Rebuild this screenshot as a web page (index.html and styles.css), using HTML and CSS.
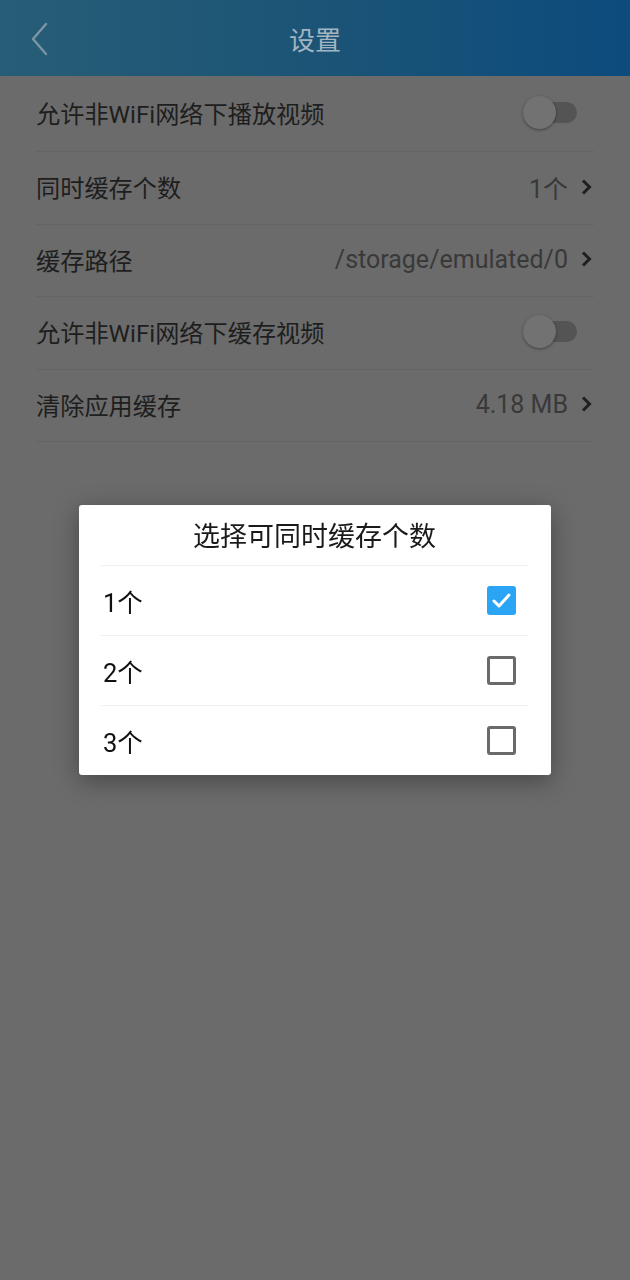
FILE: index.html
```html
<!DOCTYPE html>
<html lang="zh-CN">
<head>
<meta charset="utf-8">
<title>设置</title>
<link rel="stylesheet" href="styles.css">
</head>
<body>
<div class="page">
  <header class="topbar">
    <svg class="back" width="24" height="36" viewBox="0 0 24 36"><path d="M18 3 L5 18 L18 33" fill="none" stroke="#7c95a4" stroke-width="2.4" stroke-linecap="round" stroke-linejoin="round"/></svg>
    <div class="title">设置</div>
  </header>
  <ul class="list">
    <li class="row"><span class="label">允许非WiFi网络下播放视频</span><span class="switch"><span class="thumb"></span></span></li>
    <li class="row"><span class="label">同时缓存个数</span><span class="value">1个</span><svg class="chev" width="14" height="20" viewBox="0 0 14 20"><path d="M3 3.5 L9.5 10 L3 16.5" fill="none" stroke="#202020" stroke-width="3"/></svg></li>
    <li class="row"><span class="label">缓存路径</span><span class="value">/storage/emulated/0</span><svg class="chev" width="14" height="20" viewBox="0 0 14 20"><path d="M3 3.5 L9.5 10 L3 16.5" fill="none" stroke="#202020" stroke-width="3"/></svg></li>
    <li class="row"><span class="label">允许非WiFi网络下缓存视频</span><span class="switch"><span class="thumb"></span></span></li>
    <li class="row"><span class="label">清除应用缓存</span><span class="value">4.18 MB</span><svg class="chev" width="14" height="20" viewBox="0 0 14 20"><path d="M3 3.5 L9.5 10 L3 16.5" fill="none" stroke="#202020" stroke-width="3"/></svg></li>
  </ul>
</div>
<div class="overlay">
  <div class="dialog">
    <div class="dtitle">选择可同时缓存个数</div>
    <div class="opts">
      <div class="opt"><span>1个</span><span class="box checked"><svg width="29" height="29" viewBox="0 0 29 29"><path d="M7 15 L12 20 L22 9" fill="none" stroke="#fff" stroke-width="3" stroke-linecap="round" stroke-linejoin="round"/></svg></span></div>
      <div class="opt"><span>2个</span><span class="box"></span></div>
      <div class="opt"><span>3个</span><span class="box"></span></div>
    </div>
  </div>
</div>
</body>
</html>
```
FILE: styles.css
```css
html, body { margin: 0; padding: 0; }
body {
  background: #6b6b6b;
  font-family: Roboto, "Noto Sans CJK SC", sans-serif;
  width: 630px;
  height: 1280px;
  overflow: hidden;
}
.topbar {
  height: 76px;
  background: linear-gradient(90deg, #275d76 0%, #1b5476 50%, #0d4b7d 100%);
  display: flex;
  align-items: center;
  justify-content: center;
  position: relative;
}
.back { position: absolute; left: 28px; top: 21px; }
.title {
  color: #a3b5c1;
  font-size: 26px;
  font-family: "Noto Sans CJK SC", sans-serif;
}
.list { list-style: none; margin: 0; padding: 0 36px; }
.row {
  height: 69.5px;
  display: flex;
  align-items: center;
  border-bottom: 1px solid #646464;
  color: #1e1e1e;
  font-size: 24.2px;
  padding-bottom: 2px;
  box-sizing: content-box;
}
.row:first-child { height: 73px; }
.label { flex: 1; font-family: Roboto, "Noto Sans CJK SC", sans-serif; }
.value { color: #393939; font-size: 25px; margin-right: 12px; }
.chev { margin-right: 0; }
.switch {
  position: relative;
  width: 35px;
  height: 21px;
  margin-right: 17px;
  border-radius: 11px;
  background: #545454;
}
.thumb {
  position: absolute;
  left: -19px;
  top: -6px;
  width: 33px;
  height: 33px;
  border-radius: 50%;
  background: #727272;
  box-shadow: 0 1px 3px rgba(0,0,0,0.4);
}
.overlay {
  position: fixed;
  inset: 0;
  display: flex;
  align-items: center;
  justify-content: center;
}
.dialog {
  width: 472px;
  height: 270px;
  background: #fff;
  border-radius: 3px;
  box-shadow: 0 6px 24px rgba(0,0,0,0.35);
  padding: 0 23px 0 22px;
  box-sizing: border-box;
  display: flex;
  flex-direction: column;
}
.dtitle {
  height: 61px;
  border-bottom: 1.5px solid #f0f0f0;
  display: flex;
  align-items: center;
  justify-content: center;
  font-size: 27px;
  color: #1a1a1a;
  font-family: "Noto Sans CJK SC", sans-serif;
  box-sizing: border-box;
  padding-bottom: 2px;
}
.opts { flex: 1; display: flex; flex-direction: column; }
.opt {
  flex: 1;
  display: flex;
  align-items: center;
  justify-content: space-between;
  padding-left: 2px;
  padding-right: 12px;
  font-size: 25.5px;
  color: #111;
  border-bottom: 1.5px solid #f0f0f0;
}
.opt:last-child { border-bottom: none; }
.box {
  width: 29px;
  height: 29px;
  box-sizing: border-box;
  border: 3px solid #6a6a6a;
  border-radius: 3px;
  display: block;
}
.box.checked {
  border: none;
  background: #2aa4f4;
}
.box svg { display: block; }
```
